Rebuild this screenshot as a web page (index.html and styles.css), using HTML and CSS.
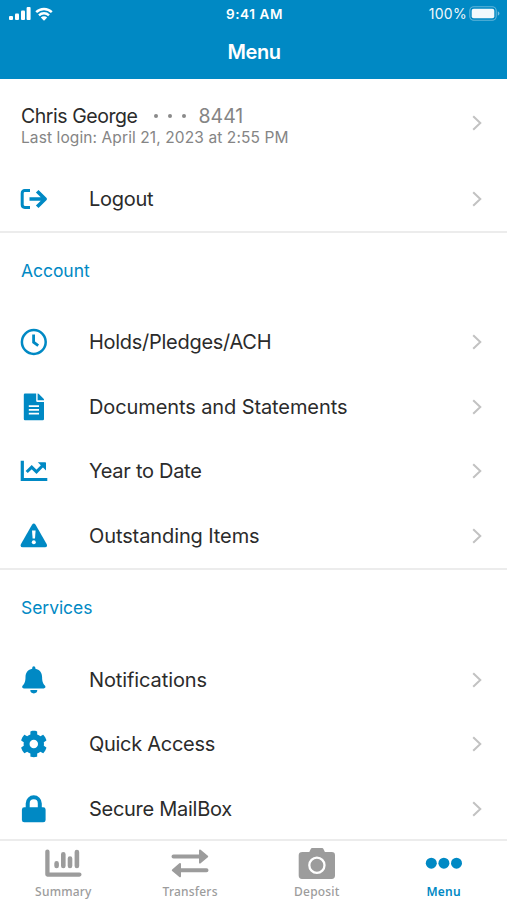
FILE: index.html
```html
<!DOCTYPE html>
<html lang="en">
<head>
	<meta charset="UTF-8">
	<title>Menu</title>
	<link rel="stylesheet" href="styles.css">
</head>
<body>
	<div class="app">
		<header class="header">
			<div class="status">
				<div class="signal">
					<svg width="22" height="13" viewBox="0 0 22 13"><rect x="0" y="9" width="4" height="4" rx="1"/><rect x="6" y="6.5" width="4" height="6.5" rx="1"/><rect x="12" y="3.5" width="4" height="9.5" rx="1"/><rect x="17.6" y="0" width="4" height="13" rx="1"/></svg>
					<svg class="wifi" width="18" height="14" viewBox="0 0 18 14"><path d="M1.2 5.2a11 11 0 0 1 15.6 0M4 8.3a7.2 7.2 0 0 1 10 0" fill="none" stroke="#fff" stroke-width="2.4"/><path d="M5.8 10.5a4.6 4.6 0 0 1 6.4 0L9 13.7z"/></svg>
				</div>
				<div class="time">9:41 AM</div>
				<div class="battery">
					<span>100%</span>
					<svg width="31" height="15" viewBox="0 0 31 15"><rect x=".8" y=".8" width="26.4" height="13.4" rx="4" fill="none" stroke="#fff" stroke-opacity=".4" stroke-width="1.1"/><rect x="2.7" y="2.7" width="22.6" height="9.6" rx="2"/><path d="M28.8 5.3v4.4q1.7-.7 1.7-2.2t-1.7-2.2z" opacity=".5"/></svg>
				</div>
			</div>
			<h1 class="title">Menu</h1>
		</header>

		<main class="content">
			<section class="group">
				<div class="user">
					<div class="info">
						<div class="name">Chris George <i class="dots"><b></b><b></b><b></b></i><span class="num">8441</span></div>
						<div class="login">Last login: April 21, 2023 at 2:55 PM</div>
					</div>
					<svg class="arrow" viewBox="0 0 10 16"><path d="M1.2 1.2L8.3 8l-7.1 6.8"/></svg>
				</div>
				<div class="row logout">
					<svg class="icon" viewBox="0 0 28 28"><path d="M10 5.6H4.8Q2.2 5.6 2.2 8.2v11.6q0 2.6 2.6 2.6H10" fill="none" stroke="#0089c4" stroke-width="3"/><path d="M9.5 14H24M17.2 6.2l7.9 7.8-7.9 7.8" fill="none" stroke="#0089c4" stroke-width="3.7" stroke-linejoin="round"/></svg>
					<span class="label">Logout</span>
					<svg class="arrow" viewBox="0 0 10 16"><path d="M1.2 1.2L8.3 8l-7.1 6.8"/></svg>
				</div>
			</section>

			<section class="group">
				<h2 class="heading">Account</h2>
				<div class="row">
					<svg class="icon" viewBox="0 0 28 28"><circle cx="13.8" cy="14" r="11.9" fill="none" stroke="#0089c4" stroke-width="2.5"/><path d="M13.6 6.6v7.6l4.6 3.4" fill="none" stroke="#0089c4" stroke-width="2.8"/></svg>
					<span class="label">Holds/Pledges/ACH</span>
					<svg class="arrow" viewBox="0 0 10 16"><path d="M1.2 1.2L8.3 8l-7.1 6.8"/></svg>
				</div>
				<div class="row">
					<svg class="icon" viewBox="0 0 28 28"><path d="M5 .5h11.2v7.2q0 1.2 1.2 1.2H24v17.2q0 1.2-1.2 1.2H5q-1.2 0-1.2-1.2V1.7Q3.8.5 5 .5z"/><path d="M17.6.5h.4q.5 0 .9.4l4.7 4.8q.4.4.4.9v.7h-6.4z"/><path d="M8.8 13.2H19M8.8 16.9H19M8.8 20.6H19" stroke="#fff" stroke-width="1.7"/></svg>
					<span class="label wide">Documents and Statements</span>
					<svg class="arrow" viewBox="0 0 10 16"><path d="M1.2 1.2L8.3 8l-7.1 6.8"/></svg>
				</div>
				<div class="row">
					<svg class="icon" viewBox="0 0 28 28"><path d="M2.3 3.7v18.8h25" fill="none" stroke="#0089c4" stroke-width="3.2"/><path d="M6.7 15l5-4.9 4.8 4.7 6.2-6.3" fill="none" stroke="#0089c4" stroke-width="3.1"/><path d="M17.8 5.3h7.4q.8 0 .8.8v7.3z"/></svg>
					<span class="label">Year to Date</span>
					<svg class="arrow" viewBox="0 0 10 16"><path d="M1.2 1.2L8.3 8l-7.1 6.8"/></svg>
				</div>
				<div class="row">
					<svg class="icon" viewBox="0 0 28 28"><path d="M12 2.7q1.8-2.6 3.6 0l11 19.4q1.3 3-1.8 3.2H2.8Q-.3 25.1 1 22.1z"/><path d="M12 8.4h3.6l-.6 8.2h-2.4z" fill="#fff"/><circle cx="13.8" cy="20.2" r="2" fill="#fff"/></svg>
					<span class="label wide">Outstanding Items</span>
					<svg class="arrow" viewBox="0 0 10 16"><path d="M1.2 1.2L8.3 8l-7.1 6.8"/></svg>
				</div>
			</section>

			<section class="group">
				<h2 class="heading">Services</h2>
				<div class="row">
					<svg class="icon" viewBox="0 0 28 28"><path d="M12.2 1.9q0-1.6 1.6-1.6t1.6 1.6v.9c4.2.8 6.7 3.9 6.7 8.3 0 5.1 1.3 6.9 2.8 8.5 1.1 1.2.5 2.9-1.2 2.9H3.9c-1.7 0-2.3-1.7-1.2-2.9 1.5-1.6 2.8-3.4 2.8-8.5 0-4.4 2.5-7.5 6.7-8.3z"/><path d="M10.3 24.1h7a3.5 3.3 0 0 1-7 0z"/></svg>
					<span class="label wide">Notifications</span>
					<svg class="arrow" viewBox="0 0 10 16"><path d="M1.2 1.2L8.3 8l-7.1 6.8"/></svg>
				</div>
				<div class="row">
					<svg class="icon" viewBox="-4 -8 528 528"><path d="M487.4 315.7l-42.6-24.6c4.3-23.2 4.3-47 0-70.2l42.6-24.6c4.9-2.8 7.1-8.6 5.5-14-11.1-35.6-30-67.8-54.7-94.6-3.8-4.1-10-5.1-14.8-2.3L380.8 110c-17.9-15.4-38.5-27.3-60.8-35.1V25.8c0-5.6-3.9-10.5-9.4-11.7-36.7-8.2-74.3-7.8-109.2 0-5.5 1.2-9.4 6.1-9.4 11.7V75c-22.2 7.9-42.8 19.8-60.8 35.1L88.7 85.5c-4.9-2.8-11-1.9-14.8 2.3-24.7 26.7-43.6 58.9-54.7 94.6-1.7 5.4.6 11.2 5.5 14L67.3 221c-4.3 23.2-4.3 47 0 70.2l-42.6 24.6c-4.9 2.8-7.1 8.6-5.5 14 11.1 35.6 30 67.8 54.7 94.6 3.8 4.1 10 5.1 14.8 2.3l42.6-24.6c17.9 15.4 38.5 27.3 60.8 35.1v49.2c0 5.6 3.9 10.5 9.4 11.7 36.7 8.2 74.3 7.8 109.2 0 5.5-1.2 9.4-6.1 9.4-11.7v-49.2c22.2-7.9 42.8-19.8 60.8-35.1l42.6 24.6c4.9 2.8 11 1.9 14.8-2.3 24.7-26.7 43.6-58.9 54.7-94.6 1.5-5.5-.7-11.3-5.6-14.1zM256 336c-44.1 0-80-35.9-80-80s35.9-80 80-80 80 35.9 80 80-35.9 80-80 80z"/></svg>
					<span class="label">Quick Access</span>
					<svg class="arrow" viewBox="0 0 10 16"><path d="M1.2 1.2L8.3 8l-7.1 6.8"/></svg>
				</div>
				<div class="row">
					<svg class="icon" viewBox="0 0 28 28"><rect x="1.9" y="12.3" width="23.7" height="15" rx="2.4"/><path d="M7.7 14V8.4a6 6 0 0 1 12.1 0V14" fill="none" stroke="#0089c4" stroke-width="4"/></svg>
					<span class="label">Secure MailBox</span>
					<svg class="arrow" viewBox="0 0 10 16"><path d="M1.2 1.2L8.3 8l-7.1 6.8"/></svg>
				</div>
			</section>
		</main>

		<nav class="tabs">
			<div class="tab">
				<svg width="38" height="34" viewBox="0 0 38 34"><path d="M3.4 3.6v23h32" fill="none" stroke="#9c9c9c" stroke-width="4.3" stroke-linecap="round" stroke-linejoin="round"/><path d="M12.6 15.4v2.6M19.3 6.2V18M26 10.6V18M32.9 4V18" fill="none" stroke="#9c9c9c" stroke-width="4.6" stroke-linecap="round"/></svg>
				<span>Summary</span>
			</div>
			<div class="tab">
				<svg width="38" height="34" viewBox="0 0 38 34"><path d="M2.5 8.5h28M35.5 22.2h-28" stroke="#9c9c9c" stroke-width="4" stroke-linecap="round"/><path d="M29 2.4l7.2 6.1-7.2 6.1zM9 16.1l-7.2 6.1L9 28.3z" stroke="#9c9c9c" stroke-width="2" stroke-linejoin="round"/></svg>
				<span>Transfers</span>
			</div>
			<div class="tab">
				<svg width="38" height="34" viewBox="0 0 38 34"><path d="M4.5 4h6.8l1.2-2.5Q13.2-.2 15-.2h8.2q1.8 0 2.5 1.7L26.9 4h6.8q3.3 0 3.3 3.3v20.3q0 3.4-3.3 3.4H4q-3.3 0-3.3-3.4V7.3Q.7 4 4.5 4z"/><circle cx="18.9" cy="17.2" r="7.6" fill="none" stroke="#fff" stroke-width="2.3"/></svg>
				<span>Deposit</span>
			</div>
			<div class="tab active">
				<svg width="38" height="34" viewBox="0 0 38 34"><circle cx="6.3" cy="15.2" r="5.5"/><circle cx="18.9" cy="15.2" r="5.5"/><circle cx="31.5" cy="15.2" r="5.5"/></svg>
				<span>Menu</span>
			</div>
		</nav>
	</div>
</body>
</html>
```

FILE: styles.css
```css
*{box-sizing:border-box;}
body{margin:0;background-color:#fff;font-family:Inter,"Liberation Sans",sans-serif;color:#2b2b2b;}
h1,h2{margin:0;font-weight:400;}
svg{display:block;flex:none;}
.app{display:flex;flex-direction:column;height:900px;overflow:hidden;}

.header{flex:none;height:79px;background-color:#0089c4;color:#fff;fill:#fff;}
.status{display:grid;grid-template-columns:1fr auto 1fr;align-items:center;height:27px;padding:0 7px 0 9px;}
.signal{display:flex;align-items:center;gap:4px;}
.time{font-size:13.5px;font-weight:600;letter-spacing:.6px;}
.battery{display:flex;align-items:center;justify-content:flex-end;gap:2px;font-size:14px;letter-spacing:.3px;opacity:.95;}
.title{height:50px;padding-left:1px;line-height:51px;text-align:center;font-size:20px;font-weight:600;letter-spacing:-.4px;}

.content{flex:1;min-height:0;overflow:hidden;}
.group{border-bottom:2px solid #ececec;}
.group:last-child{border-bottom:0;}
.user{display:flex;align-items:center;justify-content:space-between;height:88px;padding:0 25px 0 21px;}
.name{display:flex;align-items:center;height:24px;font-size:19.5px;letter-spacing:-.45px;margin-top:5px;}
.dots{display:flex;gap:10px;margin:0 12px 0 17px;}
.dots b{width:4px;height:4px;border-radius:50%;background-color:#8a8a8a;}
.num{color:#858585;letter-spacing:0;}
.login{height:20px;line-height:19px;font-size:15.5px;letter-spacing:.1px;color:#858585;}
.row{display:flex;align-items:center;height:64.65px;padding:0 25px 0 20px;}
.logout{height:64px;}
.icon{width:28px;height:28px;fill:#0089c4;}
.label{flex:1;padding-left:41px;font-size:20px;letter-spacing:-.28px;}
.wide{letter-spacing:-.1px;}
.arrow{width:10px;height:16px;fill:none;stroke:#c2c2c2;stroke-width:2;}
.heading{height:76.9px;line-height:75px;padding-left:21px;font-size:17.5px;letter-spacing:-.05px;color:#0089c4;}

.tabs{flex:none;display:grid;grid-template-columns:repeat(4,1fr);height:61px;border-top:2px solid #ececec;}
.tab{display:flex;flex-direction:column;align-items:center;padding-top:7px;font-family:"Noto Sans",sans-serif;font-size:12px;font-weight:500;line-height:17px;letter-spacing:.2px;color:#9c9c9c;fill:#9c9c9c;}
.tab span{margin-top:1px;}
.active{color:#0089c4;fill:#0089c4;font-weight:600;}
```
